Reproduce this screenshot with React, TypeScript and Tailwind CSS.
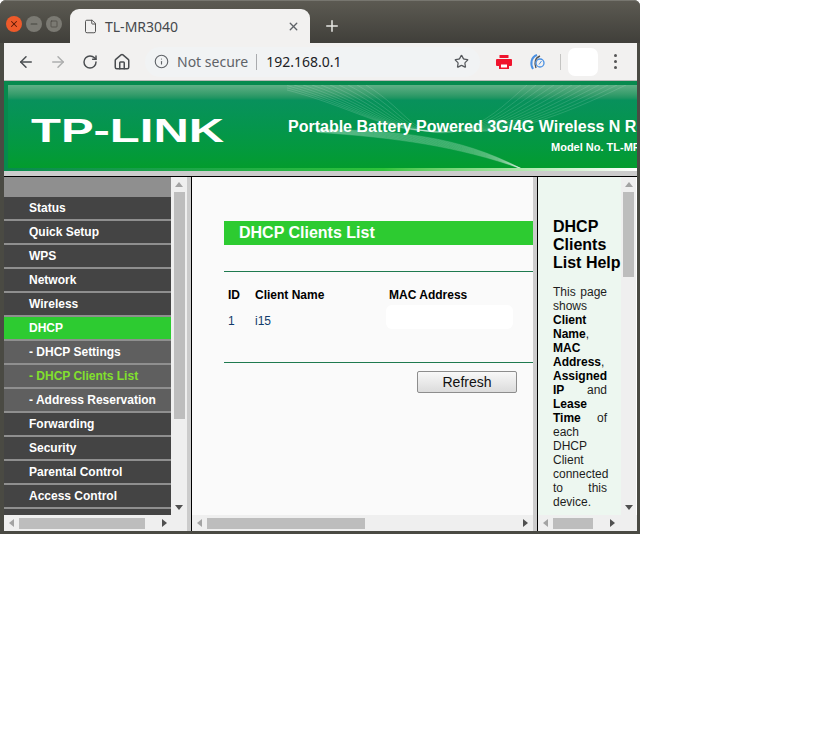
import { ArrowLeft, ArrowRight, RotateCw, Home, Info, Star, File, X, Plus, Minus, Square } from 'lucide-react';

const menu = [
  { label: 'Status' },
  { label: 'Quick Setup' },
  { label: 'WPS' },
  { label: 'Network' },
  { label: 'Wireless' },
  { label: 'DHCP', active: true },
  { label: '- DHCP Settings', sub: true },
  { label: '- DHCP Clients List', sub: true, current: true },
  { label: '- Address Reservation', sub: true },
  { label: 'Forwarding' },
  { label: 'Security' },
  { label: 'Parental Control' },
  { label: 'Access Control' },
];

function Arrow({ dir, light }: { dir: 'up' | 'down' | 'left' | 'right'; light?: boolean }) {
  const points = {
    up: '0,5 4,0 8,5',
    down: '0,0 8,0 4,5',
    left: '5,0 5,8 0,4',
    right: '0,0 0,8 5,4',
  }[dir];
  const box = dir === 'up' || dir === 'down' ? '0 0 8 5' : '0 0 5 8';
  const size = dir === 'up' || dir === 'down' ? 'w-[8px] h-[5px]' : 'w-[5px] h-[8px]';
  return (
    <svg viewBox={box} className={size}>
      <polygon points={points} fill={light ? '#a3a3a3' : '#505050'} />
    </svg>
  );
}

function HScroll({ pad, thumb, gap }: { pad: number; thumb: number; gap: number }) {
  return (
    <div className="h-[16px] shrink-0 bg-[#efefef] flex items-center">
      <div className="flex items-center justify-center w-[15px]"><Arrow dir="left" light /></div>
      <div style={{ width: thumb, marginLeft: pad }} className="h-[11px] bg-[#bdbdbd]" />
      <div style={{ marginLeft: gap }}><Arrow dir="right" /></div>
    </div>
  );
}

function VScroll({ thumb, width }: { thumb: number; width: string }) {
  return (
    <div className={`${width} shrink-0 bg-[#efefef] flex flex-col items-center relative`}>
      <div className="h-[15px] flex items-center"><Arrow dir="up" light /></div>
      <div style={{ height: thumb }} className="w-[11px] bg-[#bdbdbd]" />
      <div className="mt-auto h-[15px] flex items-center"><Arrow dir="down" /></div>
    </div>
  );
}

function Printer() {
  return (
    <svg viewBox="0 0 16 14" className="w-[16px] h-[14px]">
      <rect x="3.5" y="0" width="9" height="3" fill="#f0142d" />
      <rect x="0" y="4" width="16" height="7" rx="1" fill="#f0142d" />
      <rect x="3" y="8" width="10" height="6" fill="#f0142d" />
      <rect x="5" y="9.5" width="6" height="3" fill="#fff" />
    </svg>
  );
}

function Gauge() {
  return (
    <svg viewBox="0 0 16 16" className="w-[16px] h-[16px]" fill="none">
      <path d="M4 15C1 10 2 3 8 1" stroke="#4a90e2" strokeWidth="2" />
      <path d="M7 14C5 9 6 4 11 2" stroke="#555" strokeWidth="1.4" />
      <circle cx="11" cy="9" r="4" stroke="#4a90e2" strokeWidth="1.3" />
      <path d="M10 10.5L12.5 7" stroke="#4a90e2" strokeWidth="1" />
    </svg>
  );
}

function BannerLines() {
  const left = Array.from({ length: 12 }, (_, i) => i);
  return (
    <svg viewBox="0 0 350 84" className="absolute right-0 top-0 w-[350px] h-[84px]" fill="none">
      {left.map(i => (
        <path key={`a${i}`} d={`M${i * 9 - 20} 0 C ${60 + i * 6} ${18 + i}, ${90 + i * 3} ${44 + i}, ${140 + i * 3} 46`} stroke="#ffffff" strokeOpacity="0.14" />
      ))}
      {left.map(i => (
        <path key={`b${i}`} d={`M${240 + i * 9} 0 C ${215 + i * 5} ${22 + i}, ${200 + i * 2} ${38 + i}, ${170 + i} 46`} stroke="#ffffff" strokeOpacity="0.13" />
      ))}
      {left.map(i => (
        <path key={`c${i}`} d={`M30 ${44 + i * 0.3} C 110 ${46 + i * 0.6}, 170 ${50 + i}, 235 ${84}`} stroke="#ffffff" strokeOpacity="0.16" />
      ))}
    </svg>
  );
}

export default function App() {
  return (
    <div className="w-[833px] h-[733px] bg-white overflow-hidden font-['Liberation_Sans',Arial,sans-serif]">
      <div className="w-[640px] h-[534px] bg-[#4a4a43] rounded-t-[6px] pl-[4px] pr-[3px] pb-[3px] flex flex-col">
        {/* 標題列 */}
        <div className="h-[43px] shrink-0 -ml-[4px] -mr-[3px] rounded-t-[6px] border-t border-[#77766f] bg-gradient-to-b from-[#5c5a52] to-[#403f3a] flex items-end pl-[6px]">
          <div className="flex gap-[4px] mb-[11px]">
            <div className="w-[16px] h-[16px] rounded-full bg-[#ee5a2a] flex items-center justify-center">
              <X size={10} strokeWidth={2.5} color="#5a1a08" />
            </div>
            <div className="w-[16px] h-[16px] rounded-full bg-[#7b7a73] flex items-center justify-center">
              <Minus size={10} strokeWidth={2.5} color="#45443e" />
            </div>
            <div className="w-[16px] h-[16px] rounded-full bg-[#7b7a73] flex items-center justify-center">
              <Square size={8} strokeWidth={2} color="#45443e" />
            </div>
          </div>
          <div className="ml-[8px] w-[240px] h-[34px] bg-[#f2f1f0] rounded-t-[9px] flex items-center pl-[13px] pr-[10px]">
            <File size={15} strokeWidth={1.5} color="#4a4a4a" />
            <span className="ml-[7px] text-[14px] text-[#45484c] font-['Noto_Sans',sans-serif]">TL-MR3040</span>
            <X size={13} strokeWidth={2.5} color="#5f6368" className="ml-auto" />
          </div>
          <Plus size={18} strokeWidth={2} color="#e8e8e4" className="ml-[13px] mb-[8px]" />
        </div>

        {/* 工具列 */}
        <div className="h-[38px] shrink-0 bg-[#f2f1f0] border-b border-[#b9b9b6] flex items-center pl-[13px]">
          <ArrowLeft size={18} strokeWidth={2} color="#4a4d50" />
          <ArrowRight size={18} strokeWidth={2} color="#adaeae" className="ml-[14px]" />
          <RotateCw size={16} strokeWidth={2.2} color="#4a4d50" className="ml-[15px]" />
          <Home size={18} strokeWidth={2} color="#4a4d50" className="ml-[15px]" />
          <div className="ml-[14px] w-[335px] h-[30px] rounded-full bg-[#f1f3f4] flex items-center pl-[9px]">
            <Info size={15} strokeWidth={1.8} color="#5f6368" />
            <span className="ml-[8px] text-[14px] text-[#5f6368] font-['Noto_Sans',sans-serif]">Not secure</span>
            <div className="ml-[8px] w-px h-[16px] bg-[#a9abae]" />
            <span className="ml-[9px] text-[14px] text-[#202124] font-['Noto_Sans',sans-serif]">192.168.0.1</span>
            <Star size={15} strokeWidth={2} color="#55585c" className="ml-auto mr-[11px]" />
          </div>
          <div className="ml-[16px]"><Printer /></div>
          <div className="ml-[17px]"><Gauge /></div>
          <div className="ml-[15px] w-px h-[16px] bg-[#c4c4c2]" />
          <div className="ml-[7px] w-[30px] h-[28px] bg-white rounded-[7px]" />
          <div className="ml-[16px] flex flex-col gap-[3px]">
            <div className="w-[3px] h-[3px] rounded-full bg-[#555]" />
            <div className="w-[3px] h-[3px] rounded-full bg-[#555]" />
            <div className="w-[3px] h-[3px] rounded-full bg-[#555]" />
          </div>
        </div>

        {/* 橫幅 */}
        <div className="h-[90px] shrink-0 bg-[#078a4e] pt-[4px] pl-[4px] overflow-hidden flex flex-col">
          <div className="relative h-[83px] shrink-0 bg-gradient-to-b from-[#5fb086] via-[#08915c] via-[18%] to-[#039c2d] flex overflow-hidden">
            <BannerLines />
            <div className="relative ml-[23px] mt-[29px] w-[257px] shrink-0">
              <div className="inline-block origin-left scale-x-[1.44] text-[34px] leading-[32px] font-bold text-white whitespace-nowrap">
                TP-LINK
              </div>
            </div>
            <div className="relative mt-[33px] whitespace-nowrap text-white font-bold">
              <div className="text-[16px] leading-[18px]">Portable Battery Powered 3G/4G Wireless N Router</div>
              <div className="mt-[4px] ml-[263px] text-[11px] leading-[14px]">Model No. TL-MR3040</div>
            </div>
          </div>
          <div className="h-[3px] shrink-0 -ml-[4px] bg-gradient-to-r from-[#078a4e] via-[#2fc43a] via-[60%] to-white" />
        </div>
        <div className="h-[6px] shrink-0 bg-[#cccccc] border-b border-black" />

        {/* 框架 */}
        <div className="flex-1 min-h-0 flex bg-white">
          {/* 左側選單 */}
          <div className="w-[183px] shrink-0 flex flex-col">
            <div className="flex-1 min-h-0 flex">
              <div className="w-[167px] shrink-0 bg-[#8f8f8f] pt-[20px] overflow-hidden">
                {menu.map(item => (
                  <div
                    key={item.label}
                    className={`h-[22px] mb-[2px] pl-[25px] flex items-center text-[12px] font-bold whitespace-nowrap ${
                      item.active ? 'bg-[#2dcb31] text-white' : item.sub ? 'bg-[#5f5f5f]' : 'bg-[#444444] text-white'
                    } ${item.current ? 'text-[#82e02d]' : item.sub ? 'text-white' : ''}`}
                  >
                    {item.label}
                  </div>
                ))}
                <div className="h-[22px] bg-[#444444]" />
              </div>
              <VScroll thumb={227} width="w-[16px]" />
            </div>
            <HScroll pad={0} thumb={126} gap={17} />
          </div>
          <div className="w-[4px] shrink-0 bg-[#cccccc]" />
          <div className="w-px shrink-0 bg-black" />

          {/* 主內容 */}
          <div className="w-[341px] shrink-0 flex flex-col bg-[#fafafa]">
            <div className="flex-1 min-h-0 pt-[44px] pl-[32px] overflow-hidden">
              <div className="h-[24px] bg-[#2dcb31] pl-[15px] flex items-center text-[16px] font-bold text-white">
                DHCP Clients List
              </div>
              <div className="mt-[26px] h-px bg-[#1f7a4f]" />
              <div className="mt-[16px] flex text-[12px] leading-[14px] font-bold text-black pl-[4px]">
                <div className="w-[27px]">ID</div>
                <div className="w-[134px]">Client Name</div>
                <div>MAC Address</div>
              </div>
              <div className="mt-[12px] flex text-[12px] leading-[14px] text-[#1d1d1d] pl-[4px]">
                <div className="w-[27px] text-[#123a6b]">1</div>
                <div className="w-[131px] text-[#123a6b]">i15</div>
                <div className="relative">
                  <div className="absolute -top-[9px] left-0 w-[127px] h-[24px] bg-white rounded-[6px]" />
                </div>
              </div>
              <div className="mt-[34px] h-px bg-[#1f7a4f]" />
              <div className="mt-[8px] flex">
                <button className="ml-[193px] w-[100px] h-[22px] border border-[#8d8d8d] rounded-[2px] bg-gradient-to-b from-[#f8f8f8] to-[#dcdcdc] text-[14px] leading-[20px] text-[#111]">
                  Refresh
                </button>
              </div>
            </div>
            <HScroll pad={0} thumb={158} gap={158} />
          </div>
          <div className="w-[4px] shrink-0 bg-[#cccccc]" />
          <div className="w-px shrink-0 bg-black" />

          {/* 說明 */}
          <div className="flex-1 min-w-0 flex flex-col">
            <div className="flex-1 min-h-0 flex">
              <div className="w-[83px] shrink-0 bg-[#edf7f0] pt-[41px] pl-[15px] overflow-hidden">
                <div className="text-[16px] leading-[18px] font-bold text-black">DHCP Clients List Help</div>
                <p className="mt-[13px] w-[54px] text-[12px] leading-[14px] text-[#1d1d1d] text-justify">
                  This page shows <b className="text-black">Client Name</b>, <b className="text-black">MAC Address</b>, <b className="text-black">Assigned IP</b> and <b className="text-black">Lease Time</b> of each DHCP Client connected to this device.
                </p>
              </div>
              <VScroll thumb={85} width="w-[15px]" />
            </div>
            <HScroll pad={0} thumb={40} gap={17} />
          </div>
        </div>
      </div>
    </div>
  );
}
